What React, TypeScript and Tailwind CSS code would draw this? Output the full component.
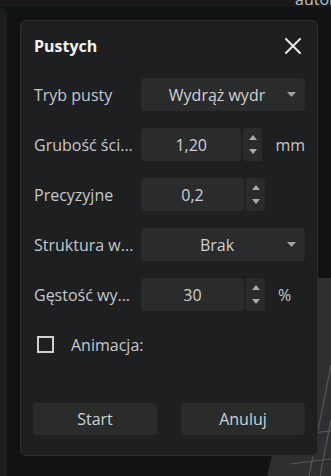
import React from 'react';

const font = { fontFamily: '"Open Sans", "Noto Sans", sans-serif' };

const Spinner = () => (
  <div className="flex w-[19px] flex-col items-center justify-between rounded-[3px] bg-[#2a2b2d] py-[7px]">
    <svg width="8" height="5" viewBox="0 0 8 5">
      <path d="M4 0 L8 5 L0 5 Z" fill="#a7a9ac" />
    </svg>
    <svg width="8" height="5" viewBox="0 0 8 5">
      <path d="M0 0 L8 0 L4 5 Z" fill="#a7a9ac" />
    </svg>
  </div>
);

const Caret = () => (
  <svg width="9" height="5" viewBox="0 0 9 5" className="absolute right-[9px] top-[14px]">
    <path d="M0 0 L9 0 L4.5 5 Z" fill="#a0a2a5" />
  </svg>
);

const Label = ({ children }: { children: React.ReactNode }) => (
  <div className="w-[108px] shrink-0 whitespace-nowrap pl-[1px] text-[16px] text-[#c5c8cc]">{children}</div>
);

const SelectRow = ({ label, value }: { label: string; value: string }) => (
  <div className="flex h-[33px] items-center">
    <Label>{label}</Label>
    <div className="relative flex h-[33px] w-[167px] items-center justify-center rounded-[4px] bg-[#2a2b2d] pr-[12px] text-[16px] text-[#cfd1d4]">
      {value}
      <Caret />
    </div>
  </div>
);

const NumberRow = ({ label, value, unit }: { label: string; value: string; unit?: string }) => (
  <div className="flex h-[33px] items-center">
    <Label>{label}</Label>
    <div className="flex h-[33px] w-[103px] items-center justify-center rounded-[4px] bg-[#2a2b2d] text-[16px] text-[#cfd1d4]">
      {value}
    </div>
    <div className="ml-[2px] flex h-[33px]">
      <Spinner />
    </div>
    {unit && <div className="ml-[13px] text-[16px] text-[#c5c8cc]">{unit}</div>}
  </div>
);

const Viewport = () => (
  <svg className="absolute inset-0" width="331" height="476" viewBox="0 0 331 476">
    <polygon points="316,278 331,278 331,476 267,476" fill="#2e2f31" />
    <g stroke="#55575a" strokeWidth="1.2" fill="none">
      <line x1="331" y1="365" x2="309" y2="476" />
      <line x1="331" y1="420" x2="320" y2="476" />
      <line x1="300" y1="434" x2="331" y2="431" />
      <line x1="290" y1="464" x2="331" y2="459" />
    </g>
  </svg>
);

export default function App() {
  return (
    <div className="relative h-[476px] w-[331px] overflow-hidden bg-[#111214]" style={font}>
      {/* top bar */}
      <div className="relative h-[7px] overflow-hidden bg-[#19191b]">
        <span className="absolute left-[295px] top-[-13px] whitespace-nowrap text-[16px] text-[#b9c2cc]">autonomiczne</span>
      </div>
      {/* left panel */}
      <div className="absolute left-0 top-[8px] h-[470px] w-[7px] rounded-tr-[6px] bg-[#1c1d1f]" />
      <Viewport />

      {/* dialog */}
      <div className="absolute left-[20px] top-[20px] flex h-[436px] w-[298px] flex-col rounded-[6px] border border-[#2d2e30] bg-[#1e1f21] px-3 pb-[20px]">
        <div className="flex h-[49px] shrink-0 items-center justify-between">
          <div className="pl-[1px] text-[16px] font-bold text-[#f2f2f2]">Pustych</div>
          <svg width="16" height="16" viewBox="0 0 16 16" className="mr-[4px]">
            <path d="M1 1 L15 15 M15 1 L1 15" stroke="#e6e6e6" strokeWidth="2" strokeLinecap="square" />
          </svg>
        </div>
        <div className="mt-[8px] flex flex-col gap-[17px]">
          <SelectRow label="Tryb pusty" value="Wydrąż wydr" />
          <NumberRow label="Grubość ści..." value="1,20" unit="mm" />
          <NumberRow label="Precyzyjne" value="0,2" />
          <SelectRow label="Struktura w..." value="Brak" />
          <NumberRow label="Gęstość wy..." value="30" unit="%" />
          <div className="flex h-[33px] items-center">
            <div className="ml-[4px] h-[17px] w-[17px] border-2 border-[#cfcfcf]" />
            <div className="ml-[17px] text-[16px] text-[#c5c8cc]">Animacja:</div>
          </div>
        </div>
        <div className="flex-1" />
        <div className="flex gap-[24px]">
          <button className="h-[32px] flex-1 rounded-[4px] bg-[#2a2c2c] text-[16px] text-[#cfd1d4]">Start</button>
          <button className="h-[32px] flex-1 rounded-[4px] bg-[#2a2c2c] text-[16px] text-[#cfd1d4]">Anuluj</button>
        </div>
      </div>
    </div>
  );
}
